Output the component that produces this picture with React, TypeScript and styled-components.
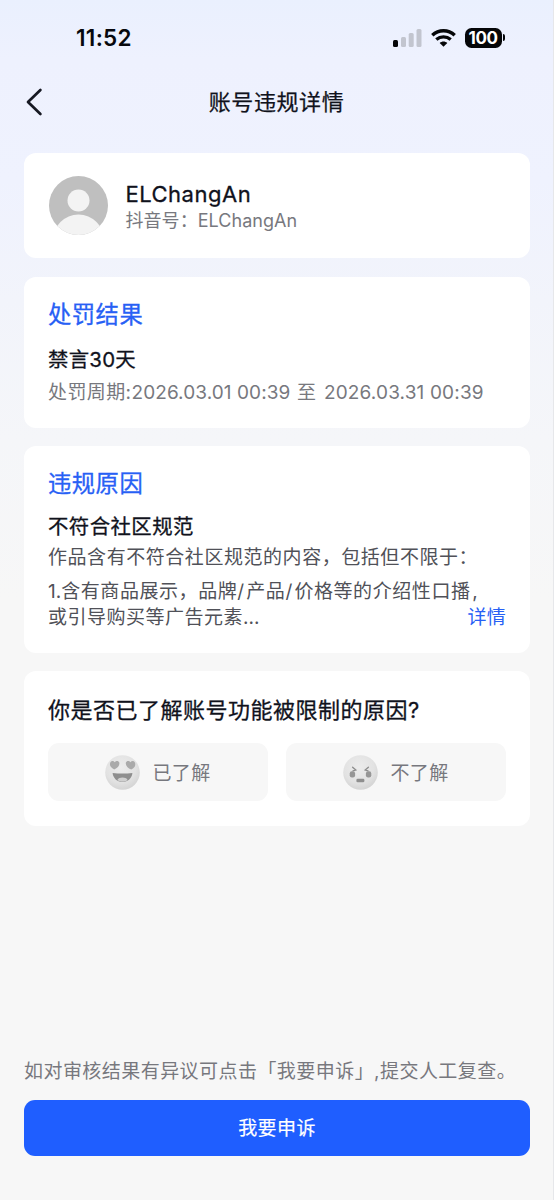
import React from "react";
import styled, { createGlobalStyle } from "styled-components";

const GlobalStyle = createGlobalStyle`
  * { box-sizing: border-box; }
  body {
    margin: 0;
    background: #f7f7f7;
    font-family: Inter, "Noto Sans CJK SC", sans-serif;
  }
`;

const Screen = styled.div`
  display: flex;
  flex-direction: column;
  width: 100%;
  height: 1200px;
  border-right: 1px solid #e6e7ea;
  background: linear-gradient(180deg, #eaf0fe 0, #eef1fe 60px, #eff2fe 180px, #f2f4fb 300px, #f5f6f9 440px, #f7f7f7 600px);
`;

const StatusBar = styled.header`
  display: flex;
  align-items: center;
  justify-content: space-between;
  height: 75px;
  padding: 0 48px 0 76px;
`;

const Clock = styled.span`
  font-size: 22.5px;
  font-weight: 600;
  letter-spacing: 0.3px;
  color: #07080d;
`;

const StatusIcons = styled.div`
  display: flex;
  align-items: center;
  gap: 9px;
`;

const Battery = styled.div`
  display: flex;
  align-items: center;
  gap: 1px;
`;

const BatteryBody = styled.span`
  width: 37px;
  height: 20px;
  border-radius: 6.5px;
  background: #050608;
  color: #fff;
  font-size: 17px;
  font-weight: 700;
  letter-spacing: -0.4px;
  line-height: 20px;
  text-align: center;
`;

const BatteryTip = styled.span`
  width: 2.5px;
  height: 7px;
  border-radius: 0 3px 3px 0;
  background: #050608;
`;

const NavBar = styled.nav`
  display: grid;
  grid-template-columns: 60px 1fr 60px;
  align-items: center;
  height: 54px;
  margin-bottom: 24px;
`;

const BackButton = styled.button`
  display: flex;
  padding: 0 0 0 25px;
  border: 0;
  background: none;
`;

const Text = styled.p<{ $size: number; $line: number; $color: string; $stroke?: number; $spacing?: number; $top?: number }>`
  margin: ${(p) => p.$top ?? 0}px 0 0;
  font-size: ${(p) => p.$size}px;
  font-weight: 400;
  line-height: ${(p) => p.$line}px;
  letter-spacing: ${(p) => p.$spacing ?? 0.4}px;
  color: ${(p) => p.$color};
  -webkit-text-stroke: ${(p) => p.$stroke ?? 0}px ${(p) => p.$color};
  white-space: nowrap;
`;

const NavTitle = styled(Text)`
  text-align: center;
`;

const Cards = styled.main`
  display: flex;
  flex: 1;
  flex-direction: column;
  gap: 18px;
  padding: 0 23px 0 24px;
`;

const Card = styled.section<{ $height: number; $pad: number }>`
  height: ${(p) => p.$height}px;
  padding: ${(p) => p.$pad}px 24px 0;
  border-radius: 12px;
  background: #fff;
`;

const ProfileCard = styled(Card)`
  display: flex;
  gap: 17.5px;
  margin-bottom: 1px;
  padding-left: 25px;
`;

const Spaced = styled.span<{ $spacing: number }>`
  letter-spacing: ${(p) => p.$spacing}px;
`;

const LastLine = styled.div`
  display: flex;
  justify-content: space-between;
`;

const Choices = styled.div`
  display: grid;
  grid-template-columns: 1fr 1fr;
  gap: 18px;
  margin-top: 18px;
`;

const Choice = styled.button`
  display: flex;
  align-items: center;
  justify-content: center;
  gap: 12px;
  height: 58px;
  padding: 1px 0 0;
  border: 0;
  border-radius: 11px;
  background: #f7f7f7;
  font-family: inherit;
`;

const Footer = styled.footer`
  padding: 0 23px 44px 24px;
`;

const AppealButton = styled.button`
  display: flex;
  align-items: center;
  justify-content: center;
  width: 100%;
  height: 56px;
  margin-top: 15px;
  padding: 2px 0 0;
  border: 0;
  border-radius: 11px;
  background: #1f5eff;
  font-family: inherit;
`;

const INK = "#10121c";
const GRAY = "#77787e";
const BODY = "#505158";
const BLUE = "#2760f5";

const Signal = () => (
  <svg width="29" height="18" viewBox="0 0 29 18">
    <rect x="0" y="11" width="5" height="7" rx="1.5" fill="#050608" />
    <rect x="8" y="8" width="5" height="10" rx="1.5" fill="#c2c5cf" />
    <rect x="15.7" y="4" width="5" height="14" rx="1.5" fill="#c2c5cf" />
    <rect x="23.5" y="0" width="5" height="18" rx="1.5" fill="#c2c5cf" />
  </svg>
);

const Wifi = () => (
  <svg width="25" height="18" viewBox="0 0 25 18" fill="none" stroke="#050608">
    <path d="M1.3 6.2C7.7 .4 17.3 .4 23.7 6.2" strokeWidth="3.5" />
    <path d="M5.3 10.6C9.5 6.9 15.5 6.9 19.7 10.6" strokeWidth="3.3" />
    <path d="M12.5 17.8L8.7 14.1C11 12.1 14 12.1 16.3 14.1Z" fill="#050608" stroke="none" />
  </svg>
);

const Avatar = () => (
  <svg width="59" height="59" viewBox="0 0 59 59">
    <defs>
      <clipPath id="avatar-disc">
        <circle cx="29.5" cy="29.5" r="29.5" />
      </clipPath>
    </defs>
    <g clipPath="url(#avatar-disc)">
      <rect width="59" height="59" fill="#bfbfbf" />
      <circle cx="29.5" cy="24.5" r="11" fill="#f3f3f3" />
      <circle cx="29.5" cy="64" r="25.5" fill="#f3f3f3" />
    </g>
  </svg>
);

const FaceGradient = ({ id }: { id: string }) => (
  <radialGradient id={id} cx="45%" cy="35%" r="68%">
    <stop offset="0" stopColor="#ececec" />
    <stop offset="0.65" stopColor="#e2e2e2" />
    <stop offset="1" stopColor="#d2d2d2" />
  </radialGradient>
);

const HappyFace = () => (
  <svg width="35" height="35" viewBox="0 0 35 35">
    <defs>
      <FaceGradient id="happy" />
    </defs>
    <circle cx="17.5" cy="17.5" r="17.3" fill="url(#happy)" />
    <path d="M9.2 14.4C5.7 12.8 4.3 10.3 5.2 7.8C6 5.7 8.6 5.5 9.7 7.2C11.1 5.2 13.8 5.6 14.3 7.6C14.9 10.4 12.7 13.2 9.2 14.4Z" fill="#aaaaaa" />
    <path d="M26.2 14.4C22.7 13.2 20.3 10.4 20.9 7.6C21.4 5.6 24.1 5.2 25.5 7.2C26.6 5.5 29.2 5.7 30 7.8C30.9 10.3 29.7 12.8 26.2 14.4Z" fill="#aaaaaa" />
    <path d="M7.6 18Q17.5 19.2 27.4 18C26.9 23.3 23 26.8 17.5 26.8C12 26.8 8.2 23.3 7.6 18Z" fill="#8e8e8e" />
    <path d="M12.4 24.9C14 21.8 21 21.8 22.6 24.9C19.8 27 15.2 27 12.4 24.9Z" fill="#d0d0d0" />
  </svg>
);

const UpsetFace = () => (
  <svg width="35" height="35" viewBox="0 0 35 35">
    <defs>
      <FaceGradient id="upset" />
    </defs>
    <circle cx="17.5" cy="17.5" r="17.3" fill="url(#upset)" />
    <g fill="none" stroke="#8c8c8c" strokeWidth="1.3" strokeLinecap="round">
      <path d="M9.6 12.2L12.8 15L10 15.8" />
      <path d="M25.4 12.2L22.2 15L25 15.8" />
    </g>
    <rect x="6.7" y="16.2" width="5.4" height="6.2" rx="2.2" fill="#969696" />
    <rect x="22.9" y="16.2" width="5.4" height="6.2" rx="2.2" fill="#969696" />
    <rect x="13.4" y="23.8" width="8" height="3.4" rx="1.3" fill="#8f8f8f" />
  </svg>
);

export default function App() {
  return (
    <Screen>
      <GlobalStyle />
      <StatusBar>
        <Clock>11:52</Clock>
        <StatusIcons>
          <Signal />
          <Wifi />
          <Battery>
            <BatteryBody>100</BatteryBody>
            <BatteryTip />
          </Battery>
        </StatusIcons>
      </StatusBar>
      <NavBar>
        <BackButton aria-label="返回">
          <svg width="19" height="28" viewBox="0 0 19 28" fill="none" stroke="#171923" strokeWidth="2.7" strokeLinecap="round" strokeLinejoin="round">
            <path d="M15.4 2L3 14L15.4 26" />
          </svg>
        </BackButton>
        <NavTitle as="h1" $size={22} $line={32} $color={INK} $stroke={0.25} $spacing={0.6}>账号违规详情</NavTitle>
      </NavBar>
      <Cards>
        <ProfileCard $height={105} $pad={23}>
          <Avatar />
          <div>
            <Text $size={22} $line={30} $color={INK} $stroke={0.3} $spacing={0.5} $top={3}>ELChangAn</Text>
            <Text $size={18} $line={24} $color={GRAY}  $spacing={0.05}>抖音号：ELChangAn</Text>
          </div>
        </ProfileCard>
        <Card $height={151} $pad={19.5}>
          <Text $size={23.3} $line={36} $color={BLUE} $stroke={0.3} $spacing={0.5}>处罚结果</Text>
          <Text $size={20.4} $line={30} $color={INK} $stroke={0.3} $spacing={0.25} $top={12.5}>禁言30天</Text>
          <Text $size={19} $line={26} $color={GRAY} $top={5}>
            处罚周期:
            <Spaced $spacing={0.08}>2026.03.01 00:39</Spaced>
            <Spaced $spacing={1.3}> 至 </Spaced>
            <Spaced $spacing={0.15}>2026.03.31 00:39</Spaced>
          </Text>
        </Card>
        <Card $height={207} $pad={20}>
          <Text $size={23.3} $line={36} $color={BLUE} $stroke={0.3} $spacing={0.5}>违规原因</Text>
          <Text $size={20.4} $line={30} $color={INK} $stroke={0.3} $spacing={0.45} $top={10}>不符合社区规范</Text>
          <Text $size={19} $line={26} $color={BODY} $spacing={0.55} $top={3}>作品含有不符合社区规范的内容，包括但不限于：</Text>
          <Text $size={19} $line={26} $color={BODY} $spacing={0.57} $top={8}>
            <Spaced $spacing={0}>1.</Spaced>含有商品展示，品牌<Spaced $spacing={2.1}>/</Spaced>产品<Spaced $spacing={2.1}>/</Spaced>价格等的介绍性口<Spaced $spacing={2.2}>播</Spaced>
            <Spaced $spacing={0}>,</Spaced>
          </Text>
          <LastLine>
            <Text $size={19} $line={26} $color={BODY} $spacing={0.5}>或引导购买等广告元素<Spaced $spacing={0}>...</Spaced></Text>
            <Text $size={19} $line={26} $color={BLUE} $spacing={0.3}>详情</Text>
          </LastLine>
        </Card>
        <Card $height={154.5} $pad={24}>
          <Text $size={22} $line={30} $color={INK} $stroke={0.3} $spacing={0.5}>你是否已了解账号功能被限制的原因?</Text>
          <Choices>
            <Choice>
              <HappyFace />
              <Text as="span" $size={19} $line={26} $color={GRAY} $top={3}>已了解</Text>
            </Choice>
            <Choice>
              <UpsetFace />
              <Text as="span" $size={19} $line={26} $color={GRAY} $top={3}>不了解</Text>
            </Choice>
          </Choices>
        </Card>
      </Cards>
      <Footer>
        <Text $size={19} $line={26} $color={GRAY} $spacing={0.45}>如对审核结果有异议可点击「我要申诉」,提交人工复查。</Text>
        <AppealButton>
          <Text as="span" $size={19} $line={26} $color="#ffffff" $stroke={0.2}>我要申诉</Text>
        </AppealButton>
      </Footer>
    </Screen>
  );
}
